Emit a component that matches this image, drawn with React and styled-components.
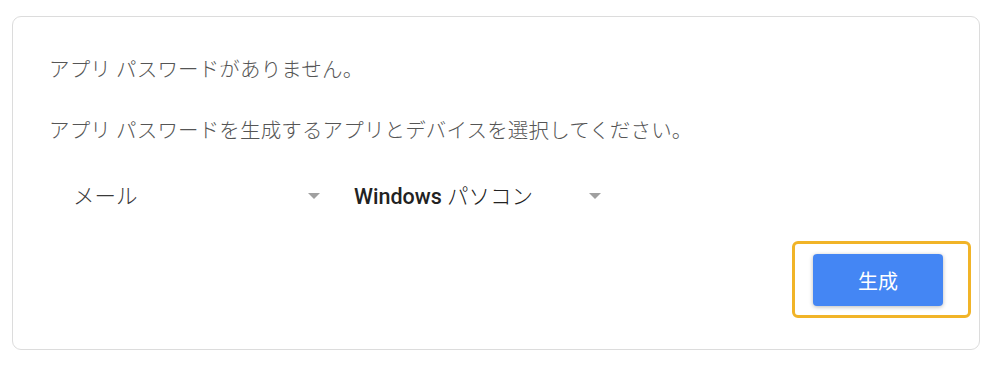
import styled, { createGlobalStyle } from "styled-components";

const GlobalStyle = createGlobalStyle`
    body {
        margin: 0;
        background: #ffffff;
        font-family: Roboto, "Noto Sans CJK JP", sans-serif;
    }
`

export default function App() {
    return (
        <>
            <GlobalStyle />
            <Card>
                <Message>アプリ パスワードがありません。</Message>
                <Message>アプリ パスワードを生成するアプリとデバイスを選択してください。</Message>
                <SelectRow>
                    <Select>
                        <SelectLabel>メール</SelectLabel>
                        <Caret />
                    </Select>
                    <Select>
                        <SelectLabel $strong><b>Windows</b> パソコン</SelectLabel>
                        <Caret />
                    </Select>
                </SelectRow>
                <Actions>
                    <ButtonWrap>
                        <Highlight />
                        <Generate>生成</Generate>
                    </ButtonWrap>
                </Actions>
            </Card>
        </>
    )
}

export const Card = styled.div`
    box-sizing: border-box;
    width: 968px;
    margin: 16px 0 0 12px;
    padding: 41px 36px 43px 36px;
    border: 1px solid #dcdcdc;
    border-radius: 9px;
    background: #ffffff;
    display: flex;
    flex-direction: column;
`
export const Message = styled.p`
    margin: 0 0 37px 0;
    font-size: 20.5px;
    line-height: 24px;
    font-weight: 300;
    color: #555555;
    letter-spacing: 0.15px;
`
export const SelectRow = styled.div`
    display: flex;
    gap: 33px;
    padding-left: 24px;
    margin-top: -3px;
    height: 40px;
    align-items: center;
`
export const Select = styled.div`
    width: 248px;
    display: flex;
    justify-content: space-between;
    align-items: center;
`
export const SelectLabel = styled.span`
    font-size: 21.5px;
    line-height: 24px;
    font-weight: 300;
    color: ${p => p.$strong ? "#222222" : "#3a3a3a"};
    b {
        font-weight: 500;
    }
`
export const Caret = styled.span`
    width: 0;
    height: 0;
    margin-right: 1px;
    margin-top: -2px;
    border-left: 6px solid transparent;
    border-right: 6px solid transparent;
    border-top: 6px solid #a0a0a0;
`
export const Actions = styled.div`
    display: flex;
    justify-content: flex-end;
    margin-top: 37px;
`
export const ButtonWrap = styled.div`
    position: relative;
`
export const Highlight = styled.div`
    position: absolute;
    left: -21px;
    top: -13px;
    right: -28px;
    bottom: -12px;
    border: 3px solid #f1b428;
    border-radius: 6px;
    pointer-events: none;
`
export const Generate = styled.button`
    position: relative;
    width: 130px;
    height: 52px;
    border: none;
    border-radius: 4px;
    background: #4486f4;
    color: #ffffff;
    font-family: Roboto, "Noto Sans CJK JP", sans-serif;
    font-size: 20px;
    box-shadow: 0 1px 4px rgba(0, 0, 0, 0.28);
    cursor: pointer;
`
